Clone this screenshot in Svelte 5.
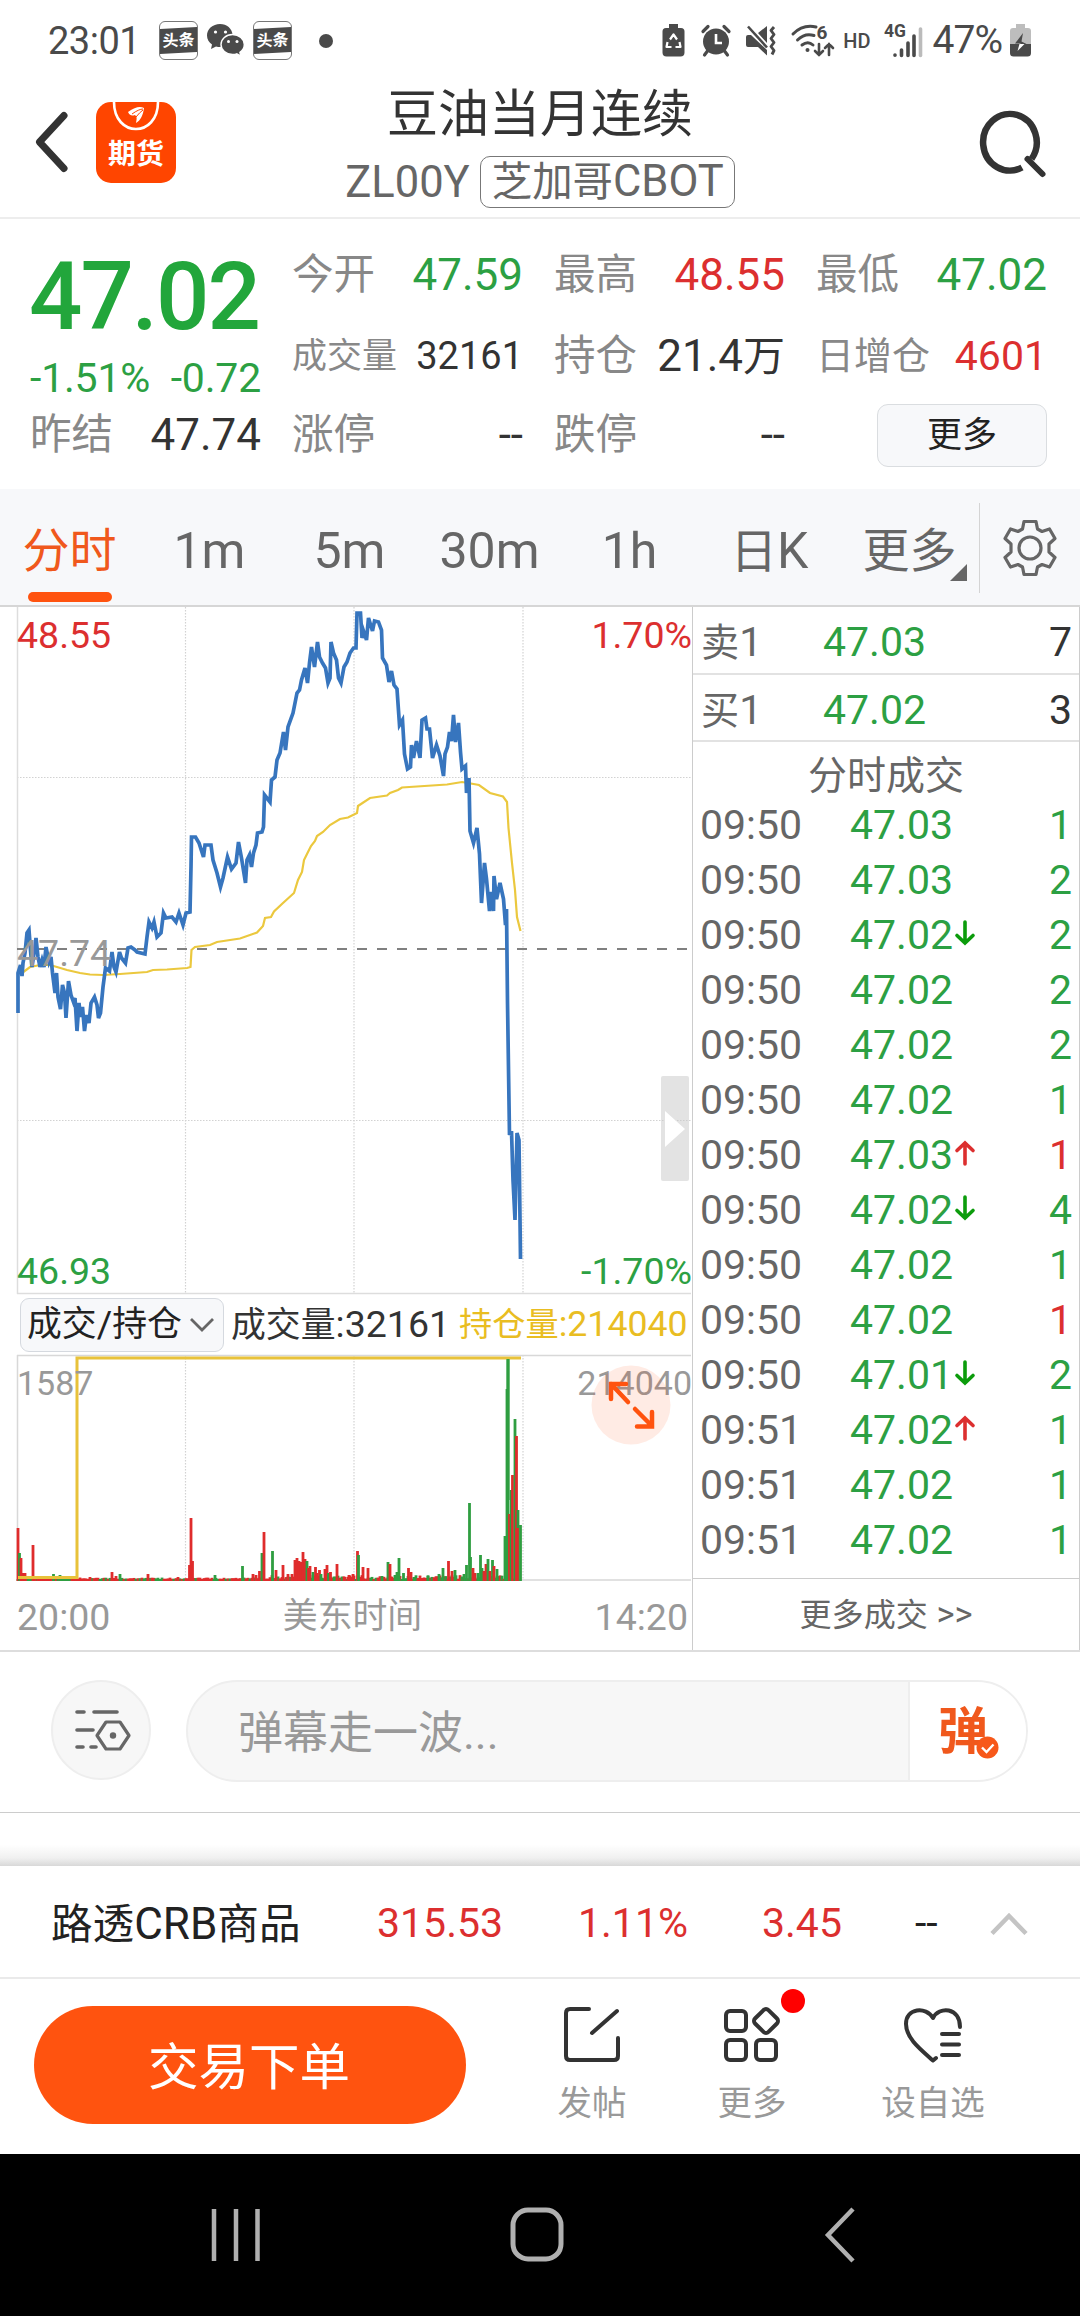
<script>
  const stats = [
    [
      { label: '今开', value: '47.59', tone: 'down' },
      { label: '成交量', value: '32161', size: 'tight' },
      { label: '涨停', value: '--' },
    ],
    [
      { label: '最高', value: '48.55', tone: 'up' },
      { label: '持仓', value: '21.4', unit: '万' },
      { label: '跌停', value: '--' },
    ],
    [
      { label: '最低', value: '47.02', tone: 'down' },
      { label: '日增仓', value: '4601', tone: 'up', size: 'snug' },
    ],
  ];

  const tabs = [
    { text: '分时', cjk: true },
    { text: '1m' },
    { text: '5m' },
    { text: '30m' },
    { text: '1h' },
    { cjkPart: '日', text: 'K' },
    { text: '更多', cjk: true, more: true },
  ];
  let activeTab = $state(0);

  const quotes = [
    { name: '卖', price: '47.03', qty: 7 },
    { name: '买', price: '47.02', qty: 3 },
  ];

  const trades = [
    { time: '09:50', price: '47.03', qty: 1 },
    { time: '09:50', price: '47.03', qty: 2 },
    { time: '09:50', price: '47.02', qty: 2, dir: 'down' },
    { time: '09:50', price: '47.02', qty: 2 },
    { time: '09:50', price: '47.02', qty: 2 },
    { time: '09:50', price: '47.02', qty: 1 },
    { time: '09:50', price: '47.03', qty: 1, dir: 'up', buy: true },
    { time: '09:50', price: '47.02', qty: 4, dir: 'down' },
    { time: '09:50', price: '47.02', qty: 1 },
    { time: '09:50', price: '47.02', qty: 1, buy: true },
    { time: '09:50', price: '47.01', qty: 2, dir: 'down' },
    { time: '09:51', price: '47.02', qty: 1, dir: 'up' },
    { time: '09:51', price: '47.02', qty: 1 },
    { time: '09:51', price: '47.02', qty: 1 },
  ];

  // Price per minute
  const priceLine =
    '18,1013 18,973 20.5,965 22,976 23,963 25,953 27,933 29,930 30.5,950 32,967 34.5,950 36,938 38,957 40,967 42,960 44,967 46,947 49,962 51,957 52.5,973 55,993 56.5,973 58,997 60.5,1009 62.5,985 64.5,993 66,1018 68.5,981 71,995 73.5,1002 75,998 77,1031 79,1003 80.5,1017 82.5,1007 84.5,1031 86.5,1015 89,1023 91,1003 94.5,997 97,1005 98.5,1018 100.5,1013 103,987 105.5,968 109.5,971 112,952 114,967 116,972 119.5,952 121.5,958 125.5,963 128,948 131,947 135,950 137,952 145,954 147,937 149,922 152,928 154,922 157,937 161,933 163.5,913 166,918 172,917 176,922 179,913 183,925 186,913 190,912 191,867 191.5,837 195.5,837 199,843 203.5,857 205,845 211,845 213,860 217,873 220.5,887 223,878 227.5,857 231.5,869 236,863 238.5,842 241.5,858 245.5,883 247,860 249.5,855 251.5,867 253.5,853 256,845 257.5,833 262,832 263.5,827 264.5,795 270,802 271.5,780 275,777 277,760 280,753 283.5,732 285.5,750 288,727 293,713 297,693 299.5,690 301.5,680 305,668 307.5,683 309.5,663 311.5,647 314.5,667 317.5,642 319.5,657 322.5,663 325.5,668 328,683 330,678 331,642 333.5,653 336.5,660 338.5,678 341,683 344,667 347,662 350,653 353.5,648 356,648 357,613 360.5,613 362,638 363.5,631 366.5,640 368.5,618 372.5,631 374.5,621 378.5,622 381.5,630 382.5,658 386.5,665 389,682 391.5,671 394,685 397,689 399.5,725 402.5,720 404.5,754 407.5,769 410.5,767 411.5,745 413.5,758 416.5,741 420,758 422,720 425.5,718 427,729 429.5,729 432.5,758 436.5,745 440,756 443.5,776 445,754 447.5,747 449.5,732 451.5,741 453.5,715 455.5,742 458.5,723 460.5,752 462,769 465.5,766 466.5,793 469,778 470,831 473.5,843 477,828 479.5,854 481.5,903 484.5,863 486.5,879 489.5,911 491.5,892 493.5,911 494,876 496.5,899 500,883 503.5,899 505.5,925 506.5,909 507.5,1002 509.5,1135 511.5,1131 513,1180 515,1220 517,1133 519,1140 520.5,1259';

  // Running average price
  const avgLine =
    '22,973 30,967 40,965 50,965 57,967 67,970 80,973 90,974.5 103,975 120,974 147,972 153,970 167,969.5 187,968 190.5,967 191.5,950 195,947 210,945 217,942 240,938.5 257,932.5 263,926 265,918 271,917 274,911.5 283,903 294,893 298,880 302,872 304,860 307,854 311,846 315,841 317,836 323,832 330,825 340,819 348,817.5 357,813 358,806 370,798 387,795.5 390,793 398,790 402,787.5 447,784.5 462,782 468,783 479,785 490,793 503,796.5 507,802 508.5,828 512,863 515,890 517,917 520.5,931';

  // [x, height, colour] of the taller volume bars
  const volumes = [
    [18, 53, 'r'], [19.5, 28, 'g'], [21, 23, 'r'], [23, 8, 'r'], [25, 8, 'r'], [33, 36, 'r'], [35, 5, 'r'],
    [53.5, 7, 'g'], [60, 6, 'g'], [90, 4, 'r'], [112, 9, 'r'], [116, 5, 'r'], [120, 7, 'g'], [148, 7, 'r'],
    [178, 4, 'r'], [191, 63, 'r'], [189.5, 16, 'r'], [192.5, 20, 'r'], [215, 6, 'g'], [242.5, 15, 'g'],
    [253, 7, 'r'], [256, 6, 'r'], [259.5, 10, 'r'], [262, 28, 'g'], [264, 49, 'r'], [272.5, 30, 'g'],
    [276, 11, 'r'], [283, 16, 'r'], [288, 7, 'r'], [292, 7, 'r'], [295, 21, 'r'], [297, 23, 'r'], [299, 20, 'r'],
    [301, 19, 'r'], [303, 29, 'r'], [305, 22, 'r'], [307, 20, 'g'], [308.5, 13, 'r'], [310, 15, 'r'],
    [313, 9, 'g'], [315.5, 14, 'r'], [317, 8, 'r'], [319.5, 11, 'r'], [321, 7, 'g'], [325, 12, 'r'],
    [327, 16, 'r'], [328.5, 8, 'g'], [330.5, 9, 'r'], [337, 17, 'r'], [345, 4, 'r'], [349, 6, 'r'], [353, 7, 'r'],
    [357.5, 30, 'r'], [358.5, 26, 'g'], [363, 14, 'r'], [368, 13, 'r'], [382, 5, 'g'], [388, 19, 'g'],
    [390, 17, 'r'], [395, 6, 'g'], [397, 9, 'g'], [399, 23, 'g'], [403.5, 8, 'g'], [408.5, 13, 'r'],
    [411, 9, 'r'], [414, 4, 'g'], [428, 5, 'g'], [439, 7, 'g'], [443, 13, 'g'], [448.5, 20, 'r'], [452, 10, 'r'],
    [455, 11, 'g'], [464, 7, 'g'], [466.5, 16, 'g'], [469.5, 78, 'g'], [470.5, 24, 'g'], [473, 13, 'r'],
    [475, 8, 'r'], [478, 8, 'g'], [480.5, 26, 'g'], [482, 13, 'g'], [484, 10, 'r'], [486, 17, 'r'], [488, 22, 'g'],
    [490, 10, 'r'], [492.5, 21, 'g'], [494, 15, 'r'], [497, 12, 'g'], [505, 45, 'g'], [507, 192, 'g'],
    [508, 222, 'g'], [509.5, 67, 'r'], [511.2, 91, 'g'], [512.5, 106, 'r'], [515, 162, 'g'], [516.5, 145, 'r'],
    [518, 71, 'g'], [517.4, 53, 'r'], [520.5, 56, 'g'],
  ];

  // low bars along the axis
  const noise = [];
  for (let i = 0; i < 251; i++) {
    const n = (i * 37 + ((i * i) % 17) * 11) % 29;
    const busy = i > 125 ? 4 : 1.5;
    noise.push([18 + i * 2, 2 + (n / 29) * busy, n % 3 === 0 ? 'g' : 'r']);
  }

  const grid = [185.5, 354, 523];
</script>

<div class="screen">
  <div class="statusbar">
    <span class="clock">23:01</span>
    <div class="notif">
      <span class="toutiao"><b>头条</b></span>
      <svg width="38" height="33" viewBox="0 0 38 33">
        <path fill="#4a4a4a" d="M13 0C5.800 0 0 5 0 11.500c0 3.700 2 7 5 9L4 25l5-2.600c4 1 8 .6 11-1.400 4-2.500 6-6 5.700-10C25 4.500 20 0 13 0z" />
        <path fill="#4a4a4a" stroke="#fff" stroke-width="1.400" d="M25.500 10.500c-6.500 0-11.500 4.500-11.500 10s5 10 11.500 10c1.500 0 3-.2 4.300-.7l4 2.200-.9-3.700c2.700-1.800 4.400-4.600 4.400-7.800 0-5.500-5.300-10-11.800-10z" />
        <g fill="#fff"><circle cx="8.500" cy="8" r="1.600" /><circle cx="18.500" cy="8" r="1.600" /><circle cx="21.500" cy="17.500" r="1.500" /><circle cx="30" cy="17.500" r="1.500" /></g>
      </svg>
      <span class="toutiao"><b>头条</b></span>
      <i class="dot"></i>
    </div>
    <div class="sys">
      <svg class="s-batt" width="23" height="33" viewBox="0 0 23 33">
        <path fill="#4a4a4a" d="M7 0h9v4h3q3.500 0 3.500 3.500v21q0 4-4 4h-14q-4 0-4-4v-21Q.5 4 4 4h3z" />
        <path d="M8 15.500l3.500-5 3.500 5M5.500 18L4.500 23h5M17.500 18l1 5h-5" fill="none" stroke="#fff" stroke-width="2.200" stroke-linejoin="round" />
      </svg>
      <svg class="s-alarm" width="30" height="31" viewBox="0 0 30 31">
        <circle cx="15" cy="16.500" r="13" fill="#4a4a4a" />
        <path d="M2 6.500l5-5M28 6.500l-5-5M6.500 26l-3 4M23.500 26l3 4" stroke="#4a4a4a" stroke-width="3.200" stroke-linecap="round" />
        <path d="M15 9v9h6" fill="none" stroke="#fff" stroke-width="2.600" />
      </svg>
      <svg class="s-mute" width="31" height="31" viewBox="0 0 31 31">
        <path fill="#4a4a4a" d="M0 12q0-2 2-2h3l16 15v5.500L12 22H2q-2 0-2-2zM21 1v17l-9-10z" />
        <path d="M2 1.500l19 21" stroke="#4a4a4a" stroke-width="2.600" />
        <path d="M28 2l-3 3.500 3 4-3 4 3 4-3 4 3 4-2 4" fill="none" stroke="#4a4a4a" stroke-width="2.900" stroke-linejoin="round" />
      </svg>
      <svg class="s-wifi" width="43" height="34" viewBox="0 0 43 34">
        <g fill="none" stroke="#4a4a4a" stroke-width="3" stroke-linecap="round">
          <path d="M2 10Q12 0 25 3M6.500 16Q14 8.500 23 11.500M11 21q6-4.500 11 0" />
          <path d="M28 20v11m-4-4l4 4 4-4M38 31V20m-4 4l4-4 4 4" stroke-width="2.600" />
        </g>
        <circle cx="16.500" cy="26" r="2" fill="#4a4a4a" />
        <text x="25.500" y="15" font-size="19" font-weight="700" fill="#4a4a4a">6</text>
      </svg>
      <span class="hd">HD</span>
      <svg class="s-sig" width="39" height="35" viewBox="0 0 39 35">
        <text x="0" y="13.500" font-size="17.500" font-weight="700" fill="#4a4a4a">4G</text>
        <g stroke="#4a4a4a" stroke-width="3.600" stroke-linecap="round">
          <path d="M11 32v.3M17.500 27v5.500M24 20v12.500M30 13v19.500" />
          <path d="M36.500 6v26.500" stroke="#bbb" />
        </g>
      </svg>
      <span class="pct">47%</span>
      <svg width="22" height="33" viewBox="0 0 22 33">
        <path fill="#bdbdbd" d="M6 0h9v4h3q3 0 3 3v14H0V7q0-3 3-3h3z" />
        <path fill="#4a4a4a" d="M0 20h21v9q0 3.500-3.500 3.500h-14Q0 32.500 0 29z" />
        <path fill="#4a4a4a" d="M13 9L5 19.500h5l1 .5h5.500l-5-2.500z" />
        <path fill="#fff" d="M9.500 20h5L7.500 27z" />
      </svg>
    </div>
  </div>

  <header>
    <div class="side">
      <svg class="back" width="36" height="62" viewBox="0 0 36 62"><path d="M30 4.500L5.500 31 30 57.500" fill="none" stroke="#333" stroke-width="7" stroke-linecap="round" stroke-linejoin="round" /></svg>
      <div class="logo">
        <svg width="80" height="81" viewBox="0 0 80 81">
          <path d="M18 0c0 36 44 36 44 0" fill="none" stroke="#fff" stroke-width="2.600" />
          <path d="M32 10c7-5 12-6 16-4-1 7-3 12-8 15 1-5 1-6-1-8-3 1-5 1-7-3z" fill="#fff" />
          <path d="M36 12q7-5 11-5M40 15q4-5 7-7" stroke="#ff4500" stroke-width="1" fill="none" />
        </svg>
        <b>期货</b>
      </div>
    </div>
    <div class="title">
      <h1>豆油当月连续</h1>
      <p><span>ZL00Y</span><span class="exchange"><i>芝加哥</i>CBOT</span></p>
    </div>
    <div class="side end">
      <svg width="68" height="70" viewBox="0 0 68 70">
        <path d="M41 58.500A26.800 28.300 0 1 1 50.500 50" fill="none" stroke="#333" stroke-width="6.500" />
        <path d="M46.500 50L61.500 65" stroke="#333" stroke-width="6" stroke-linecap="round" />
      </svg>
    </div>
  </header>

  <section class="summary">
    <div class="main">
      <strong>47.02</strong>
      <div class="change"><span>-1.51%</span><span>-0.72</span></div>
      <div class="stat"><i>昨结</i><span>47.74</span></div>
    </div>
    {#each stats as column}
      <div class="column">
        {#each column as s}
          <div class="stat {s.tone ?? ''} {s.size ?? ''}">
            <i>{s.label}</i>
            <span>{s.value}{#if s.unit}<em>{s.unit}</em>{/if}</span>
          </div>
        {/each}
        {#if column.length < 3}
          <div class="stat"><button class="detail">更多</button></div>
        {/if}
      </div>
    {/each}
  </section>

  <nav class="tabs">
    {#each tabs as tab, i}
      <button class:active={i === activeTab} class:cjk={tab.cjk} onclick={() => (activeTab = i)}>
        {#if tab.cjkPart}<i>{tab.cjkPart}</i>{/if}{tab.text}
        {#if tab.more}<span class="corner"></span>{/if}
      </button>
    {/each}
    <div class="gear">
      <svg width="54" height="58" viewBox="-27 -29 54 58" fill="none" stroke="#666" stroke-width="3.200" stroke-linejoin="round">
        <path d="M-6-26.500H6L7.500-19 12-16.500 19.500-19 25-9.500 19-4V4L25 9.500 19.500 19 12 16.500 7.500 19 6 26.500H-6L-7.500 19-12 16.500-19.500 19-25 9.500-19 4V-4L-25-9.500-19.500-19-12-16.500-7.500-19z" />
        <circle r="11" />
      </svg>
    </div>
  </nav>

  <main>
    <div class="charts">
      <div class="price">
        <svg width="692" height="688" viewBox="0 607 692 688">
          <g stroke="#d2d2d2" stroke-width="1.200" stroke-dasharray="1.500 1.500">
            {#each grid as x}<path d="M{x} 607V1294" />{/each}
            <path d="M17 777.500H691M17 1120.500H691" />
          </g>
          <path d="M17.500 607V1294M17 1293.500H691" stroke="#ddd" stroke-width="1.500" />
          <path d="M17 949H691" stroke="#808080" stroke-width="2" stroke-dasharray="10 10" />
          <polyline points={avgLine} fill="none" stroke="#ebc83e" stroke-width="2.200" />
          <polyline points={priceLine} fill="none" stroke="#3775be" stroke-width="3.700" />
        </svg>
        <span class="lbl tl">48.55</span>
        <span class="lbl tr">1.70%</span>
        <span class="lbl mid">47.74</span>
        <span class="lbl bl">46.93</span>
        <span class="lbl br">-1.70%</span>
        <span class="handle"></span>
      </div>

      <div class="indicator">
        <button>
          <i>成交</i>/<i>持仓</i>
          <svg width="26" height="16" viewBox="0 0 26 16"><path d="M2 2l11 11L24 2" fill="none" stroke="#666" stroke-width="2.800" /></svg>
        </button>
        <span><i>成交量</i>:32161</span>
        <span class="gold"><i>持仓量</i>:214040</span>
      </div>

      <div class="volume">
        <svg width="692" height="227" viewBox="0 1355 692 227">
          <g stroke="#d2d2d2" stroke-width="1.200" stroke-dasharray="1.500 1.500">
            {#each grid as x}<path d="M{x} 1355V1580" />{/each}
          </g>
          <path d="M17.500 1355V1580M17 1355.500H691M17 1580H691" stroke="#d8d8d8" stroke-width="1.500" />
          {#each [...noise, ...volumes] as [x, h, c]}
            <rect x={x - 1.4} y={1581 - h} width="2.800" height={h} fill={c === 'r' ? '#df2c2c' : '#2f9e41'} />
          {/each}
          <path d="M18 1577.500H77V1358H521" fill="none" stroke="#e8c23a" stroke-width="3" />
          <path d="M508 1359V1500" stroke="#2f9e41" stroke-width="3" />
        </svg>
        <span class="vl left">1587</span>
        <span class="vl right">214040</span>
        <svg class="expand" width="80" height="80" viewBox="0 0 80 80">
          <circle cx="40" cy="40" r="39.500" fill="#ff4b0a" fill-opacity=".11" />
          <path d="M37 37L20 19M20 34V19h15M44 44l17 17M61 47v14.500H46" fill="none" stroke="#ff530f" stroke-width="4.500" stroke-linecap="round" />
        </svg>
      </div>

      <div class="axis"><span>20:00</span><i>美东时间</i><span>14:20</span></div>
    </div>

    <aside>
      {#each quotes as q}
        <div class="quote"><span class="who"><i>{q.name}</i>1</span><span class="down">{q.price}</span><span class="num">{q.qty}</span></div>
      {/each}
      <h2>分时成交</h2>
      <div class="trades">
        {#each trades as t}
          <div class="trade">
            <span class="time">{t.time}</span>
            <span class="down">{t.price}</span>
            <span class="arrow">
              {#if t.dir}
                <svg class={t.dir} width="20" height="26" viewBox="0 0 20 26"><path d="M10 24V3M2 10.500L10 3l8 7.500" fill="none" stroke="currentColor" stroke-width="3.600" stroke-linecap="round" /></svg>
              {/if}
            </span>
            <span class="num" class:up={t.buy} class:down={!t.buy}>{t.qty}</span>
          </div>
        {/each}
      </div>
      <div class="more-trades"><i>更多成交</i> &gt;&gt;</div>
    </aside>
  </main>

  <section class="danmu">
    <div class="round">
      <svg width="56" height="42" viewBox="0 0 56 42" fill="none" stroke="#666" stroke-width="3.600" stroke-linecap="round" stroke-linejoin="round">
        <path d="M2 3h7M19 3h23M2 21h16M2 38h6M16 38h5" />
        <path d="M31 13h14l9 13.500L45 40H31L22 26.500z" stroke-width="3.200" />
        <circle cx="38" cy="26.500" r="3.200" fill="#666" stroke="none" />
      </svg>
    </div>
    <div class="pill">
      <span>弹幕走一波...</span>
      <div class="toggle">
        <b>弹</b>
        <svg width="23" height="23" viewBox="0 0 23 23"><circle cx="11.500" cy="11.500" r="11" fill="#f7581a" /><path d="M6 11.500l4.500 4.500 7-7.500" fill="none" stroke="#fff" stroke-width="2.400" /></svg>
      </div>
    </div>
  </section>

  <div class="shade"></div>

  <section class="index">
    <span class="name"><i>路透</i>CRB<i>商品</i></span>
    <span class="up v1">315.53</span>
    <span class="up v2">1.11%</span>
    <span class="up v3">3.45</span>
    <span class="v4">--</span>
    <svg width="38" height="24" viewBox="0 0 38 24"><path d="M2 21.500L19 4l17 17.500" fill="none" stroke="#c4c4c4" stroke-width="4.500" /></svg>
  </section>

  <footer>
    <button class="order">交易下单</button>
    <div class="action post">
      <svg width="58" height="58" viewBox="0 0 58 58" fill="none" stroke="#333" stroke-width="4" stroke-linecap="round" stroke-linejoin="round"><path d="M26 3H7Q3 3 3 7v43q0 4 4 4h44q4 0 4-4V32M29 27L54 5" /></svg>
      <span>发帖</span>
    </div>
    <div class="action rest">
      <svg width="58" height="58" viewBox="0 0 58 58" fill="none" stroke="#333" stroke-width="4"><rect x="3" y="5" width="20" height="20" rx="4" /><rect x="3" y="34" width="20" height="20" rx="4" /><rect x="33" y="34" width="20" height="20" rx="4" /><rect x="33.500" y="5.500" width="19" height="19" rx="3.500" transform="rotate(45 43 15)" /></svg>
      <span>更多</span>
      <em class="badge"></em>
    </div>
    <div class="action fav">
      <svg width="60" height="58" viewBox="0 0 60 58" fill="none" stroke="#333" stroke-width="4" stroke-linecap="round" stroke-linejoin="round"><path d="M33 52l-3 2.500C17 43 3 32 3 18 3 2 23 0 30 12 36 0 57 1 57 21M39 28h17M39 38.500h17M39 49h17" /></svg>
      <span>设自选</span>
    </div>
  </footer>

  <div class="sysnav">
    <svg width="50" height="56" viewBox="0 0 50 56"><path d="M3 2v52M25 2v52M46.500 2v52" stroke="#b0b0b0" stroke-width="4.500" /></svg>
    <svg width="54" height="56" viewBox="0 0 54 56"><rect x="3" y="3" width="48" height="49" rx="15" fill="none" stroke="#b0b0b0" stroke-width="5" /></svg>
    <svg width="33" height="56" viewBox="0 0 33 56"><path d="M29 2L4 28l25 26" fill="none" stroke="#b0b0b0" stroke-width="4.500" /></svg>
  </div>
</div>

<style>
  :global(body) {
    background: #fff;
  }

  .screen {
    width: 1080px;
    height: 2316px;
    overflow: hidden;
    display: flex;
    flex-direction: column;
    background: #fff;
    color: #333;
    font-family: Roboto, 'Noto Sans CJK SC', sans-serif;
    font-size: 41px;
    line-height: 1;
  }

  .screen * {
    box-sizing: border-box;
  }

  svg {
    display: block;
    flex: none;
    overflow: visible;
  }

  i,
  em {
    font-style: normal;
  }

  /* Chinese runs sit a little smaller than the digits beside them */
  i {
    font-size: 0.93em;
  }

  button {
    border: 0;
    padding: 0;
    background: none;
    color: inherit;
    font: inherit;
  }

  h1,
  h2,
  p {
    margin: 0;
    font-weight: 400;
  }

  .up {
    color: #dc2f2f;
  }

  .down {
    color: #2ca043;
  }

  /* status bar */
  .statusbar {
    height: 73px;
    padding: 8px 48px 0 48px;
    display: flex;
    align-items: center;
    color: #4a4a4a;
  }

  .clock {
    width: 111px;
    font-size: 38px;
    letter-spacing: -0.5px;
  }

  .notif {
    display: flex;
    align-items: center;
    gap: 8.500px;
  }

  .toutiao {
    width: 39px;
    height: 39px;
    border: 1.500px solid #777;
    border-radius: 6px;
    display: flex;
    align-items: center;
    justify-content: center;
    overflow: hidden;
  }

  .toutiao b {
    width: 39px;
    height: 25px;
    flex: none;
    background: #4a4a4a;
    color: #fff;
    font-size: 16px;
    line-height: 25px;
    text-align: center;
    transform: skewY(-3deg);
  }

  .dot {
    width: 14px;
    height: 14px;
    margin-left: 18px;
    border-radius: 50%;
    background: #4a4a4a;
  }

  .sys {
    margin-left: auto;
    display: flex;
    align-items: center;
  }

  .s-batt {
    margin-right: 16px;
  }

  .s-alarm {
    margin-right: 15px;
  }

  .s-mute {
    margin-right: 14px;
  }

  .s-wifi {
    margin-right: 9px;
  }

  .hd {
    font-size: 20px;
    font-weight: 500;
    margin-right: 13px;
  }

  .s-sig {
    margin-right: 10px;
  }

  .pct {
    font-size: 39px;
    letter-spacing: -1px;
    margin-right: 8px;
  }

  /* title bar */
  header {
    height: 146px;
    display: flex;
    border-bottom: 2px solid #ededed;
  }

  .side {
    width: 200px;
    padding: 29px 0 0 34px;
    display: flex;
    align-items: flex-start;
  }

  .back {
    margin: 9px 26px 0 0;
  }

  .logo {
    position: relative;
    width: 80px;
    height: 81px;
    border-radius: 15px;
    background: #ff4500;
    overflow: hidden;
  }

  .logo b {
    position: absolute;
    left: 0;
    right: 0;
    top: 39px;
    text-align: center;
    font-size: 28px;
    color: #fff;
  }

  .side.end {
    padding: 36px 0 0 101px;
  }

  .title {
    flex: 1;
    text-align: center;
    padding-top: 12px;
  }

  h1 {
    font-size: 51px;
    line-height: 60px;
  }

  .title p {
    display: flex;
    justify-content: center;
    align-items: center;
    gap: 10px;
    margin-top: 11px;
    font-size: 43.500px;
    line-height: 49px;
    color: #666;
  }

  .exchange {
    height: 52px;
    padding: 0 10px 0 11px;
    border: 1.500px solid #777;
    border-radius: 10px;
  }

  /* quote summary */
  .summary {
    height: 270px;
    padding: 16px 32px 0 30px;
    display: flex;
    gap: 31px;
  }

  .main,
  .column {
    width: 231px;
    display: flex;
    flex-direction: column;
  }

  .main strong {
    height: 122px;
    margin-left: -1px;
    font-size: 94px;
    font-weight: 500;
    line-height: 124px;
    letter-spacing: -2px;
    color: #22a63b;
  }

  .change {
    height: 43px;
    display: flex;
    justify-content: space-between;
    align-items: center;
    font-size: 41px;
    letter-spacing: -0.200px;
    color: #2ca043;
  }

  .stat {
    height: 80px;
    display: flex;
    justify-content: space-between;
    align-items: center;
    white-space: nowrap;
    font-size: 44px;
  }

  .column .stat:nth-child(2) {
    padding-top: 2px;
  }

  .main .stat {
    height: 67px;
    padding-top: 2px;
  }

  .stat i {
    color: #888;
    font-size: 41.500px;
  }

  .stat em {
    font-size: 42px;
  }

  .stat.up,
  .stat.down {
    color: inherit;
  }

  .stat.up span {
    color: #dc2f2f;
  }

  .stat.down span {
    color: #2ca043;
  }

  .stat.tight span {
    font-size: 38px;
  }

  .stat.tight i {
    font-size: 35px;
  }

  .stat.snug span {
    font-size: 41px;
  }

  .stat.snug i {
    font-size: 38px;
  }

  .detail {
    width: 170px;
    height: 63px;
    margin-left: auto;
    border: 1.500px solid #dadde0;
    border-radius: 11px;
    background: #f7f8fa;
    font-size: 35px;
    color: #222;
  }

  /* period tabs */
  .tabs {
    height: 118px;
    display: flex;
    background: #f7f8fa;
    border-bottom: 2px solid #d6d6d6;
  }

  .tabs button {
    position: relative;
    width: 140px;
    padding: 7px 1px 0 0;
    font-size: 50px;
    color: #666;
  }

  .tabs button.cjk {
    font-size: 47px;
  }

  .tabs button.active {
    color: #f0581c;
  }

  .tabs button.active::after {
    content: '';
    position: absolute;
    left: 28px;
    bottom: 3px;
    width: 84px;
    height: 10px;
    border-radius: 5px;
    background: #ff530f;
  }

  .corner {
    position: absolute;
    right: 13px;
    bottom: 24px;
    border-left: 17px solid transparent;
    border-bottom: 17px solid #666;
  }

  .gear {
    flex: 1;
    margin: 14px 0 12px -1px;
    border-left: 1.500px solid #d4d4d4;
    display: flex;
    align-items: center;
    justify-content: center;
  }

  /* charts and order book */
  main {
    height: 1043px;
    display: flex;
  }

  .charts {
    width: 692px;
  }

  .price {
    position: relative;
    height: 688px;
  }

  .lbl {
    position: absolute;
    font-size: 37.500px;
  }

  .tl {
    left: 17px;
    top: 10px;
    color: #dc2f2f;
  }

  .tr {
    right: 0;
    top: 10px;
    color: #dc2f2f;
  }

  .mid {
    left: 17px;
    top: 328px;
    color: #999;
  }

  .bl {
    left: 17px;
    bottom: 5px;
    color: #2ca043;
  }

  .br {
    right: 0;
    bottom: 5px;
    color: #2ca043;
  }

  .handle {
    position: absolute;
    right: 3px;
    top: 469px;
    width: 28px;
    height: 105px;
    border-radius: 2px;
    background: rgba(200, 200, 200, 0.5);
    display: flex;
    align-items: center;
    justify-content: center;
  }

  .handle::after {
    content: '';
    border-left: 20px solid #fff;
    border-top: 18px solid transparent;
    border-bottom: 18px solid transparent;
  }

  .indicator {
    height: 60px;
    padding-left: 20px;
    display: flex;
    align-items: center;
    white-space: nowrap;
    font-size: 37.500px;
  }

  .indicator button {
    flex: none;
    width: 204px;
    height: 54px;
    padding-left: 6px;
    border: 1.500px solid #d5d9df;
    border-radius: 9px;
    background: #f7f8fa;
    color: #222;
    display: flex;
    align-items: center;
  }

  .indicator button svg {
    margin-left: 7px;
  }

  .indicator span {
    margin-left: 7px;
  }

  .indicator .gold {
    margin-left: 9px;
    font-size: 35.700px;
    color: #e9bd22;
  }

  .volume {
    position: relative;
    height: 227px;
  }

  .vl {
    position: absolute;
    top: 11px;
    font-size: 34px;
    color: #999;
  }

  .vl.left {
    left: 17px;
  }

  .vl.right {
    right: 0;
  }

  .expand {
    position: absolute;
    left: 591px;
    top: 10px;
  }

  .axis {
    height: 68px;
    padding: 3px 4px 0 17px;
    display: flex;
    justify-content: space-between;
    align-items: center;
    font-size: 37.500px;
    color: #999;
  }

  aside {
    flex: 1;
    border-left: 1.500px solid #ccc;
    border-right: 1.500px solid #ccc;
    display: flex;
    flex-direction: column;
  }

  .quote {
    height: 68.500px;
    padding: 6px 7px 0 8px;
    border-bottom: 2px solid #e2e2e2;
    display: flex;
    align-items: center;
  }

  .who {
    width: 122px;
    color: #666;
  }

  .num {
    margin-left: auto;
  }

  h2 {
    height: 56px;
    text-align: center;
    font-size: 39px;
    line-height: 69px;
    color: #666;
  }

  .trade {
    height: 55px;
    padding: 0 7px 0 7px;
    display: flex;
    align-items: center;
  }

  .time {
    width: 150px;
    color: #666;
  }

  .arrow {
    width: 24px;
    padding: 0 0 5px 2px;
  }

  .arrow .down {
    color: #0c9c0c;
    transform: rotate(180deg);
  }

  .more-trades {
    flex: 1;
    margin-top: 10px;
    border-top: 1.500px solid #ccc;
    text-align: center;
    font-size: 34.500px;
    line-height: 70px;
    color: #666;
  }

  /* comment bar */
  .danmu {
    height: 163px;
    padding: 28px 52px 0 51px;
    border-top: 2px solid #ddd;
    border-bottom: 1.500px solid #ccc;
    display: flex;
    gap: 35px;
  }

  .round {
    width: 100px;
    height: 100px;
    padding-left: 4px;
    border: 2px solid #eee;
    border-radius: 50%;
    background: #f7f7f7;
    display: flex;
    align-items: center;
    justify-content: center;
  }

  .pill {
    flex: 1;
    height: 102px;
    border: 2px solid #eee;
    border-radius: 51px;
    background: #f7f7f7;
    overflow: hidden;
    display: flex;
    justify-content: space-between;
    padding-left: 50px;
    font-size: 45px;
    line-height: 104px;
    color: #999;
  }

  .toggle {
    position: relative;
    width: 118px;
    padding-left: 28px;
    border-left: 2px solid #eee;
    background: #fff;
  }

  .toggle b {
    font-size: 50px;
    line-height: 99px;
    color: #f0581c;
  }

  .toggle svg {
    position: absolute;
    left: 66px;
    top: 54px;
  }

  .shade {
    height: 53px;
    background: linear-gradient(#fff 60%, #f0f0f0 85%, #d8d8d8);
  }

  .index {
    height: 113px;
    padding: 4px 51px 0 51px;
    border-bottom: 2px solid #eaeaea;
    display: flex;
    align-items: center;
    white-space: nowrap;
    color: #222;
  }

  .name {
    width: 326px;
    font-size: 44px;
  }

  .name i {
    font-size: 0.945em;
  }

  .index .up {
    color: #dc2f2f;
  }

  .v1 {
    width: 201px;
  }

  .v2 {
    width: 184px;
  }

  .v3 {
    width: 153px;
  }

  .v4 {
    width: 75px;
  }

  /* bottom actions */
  footer {
    height: 175px;
    padding: 27px 0 0 34px;
    display: flex;
  }

  .order {
    width: 432px;
    height: 118px;
    border-radius: 59px;
    background: #ff530f;
    color: #fff;
    font-size: 50.500px;
    padding: 6px 2px 0 0;
  }

  .action {
    position: relative;
    width: 104px;
    display: flex;
    flex-direction: column;
    align-items: center;
    gap: 22px;
    font-size: 34.500px;
    color: #999;
  }

  .post {
    margin-left: 74px;
  }

  .rest {
    margin-left: 56px;
  }

  .fav {
    margin-left: 77px;
  }

  .badge {
    position: absolute;
    right: -1px;
    top: -17px;
    width: 24px;
    height: 24px;
    border-radius: 50%;
    background: #f00;
  }

  .sysnav {
    height: 162px;
    padding: 0 223px 0 211px;
    background: #000;
    display: flex;
    align-items: center;
    gap: 249px;
  }

  .sysnav svg:last-child {
    margin-left: auto;
  }
</style>
